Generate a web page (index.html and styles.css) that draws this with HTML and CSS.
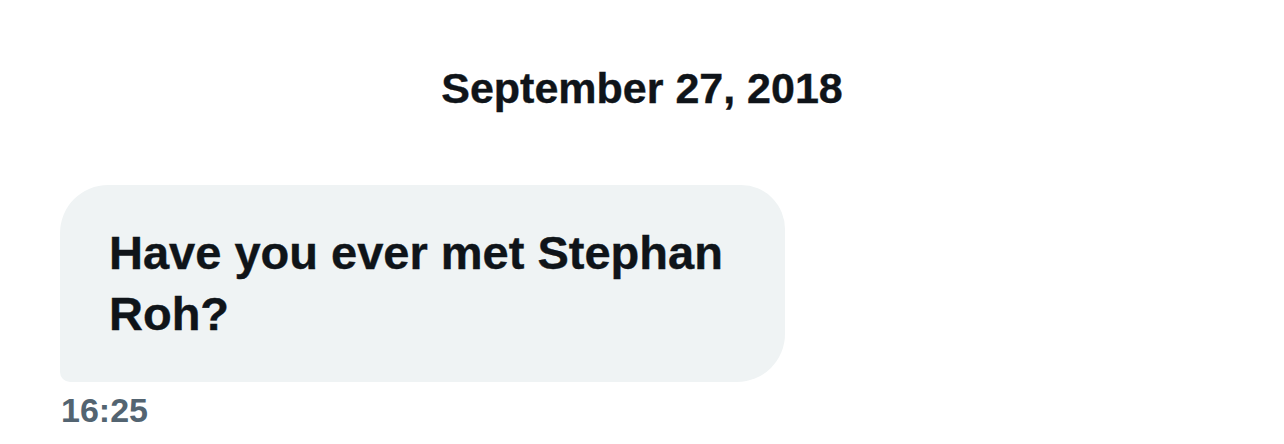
FILE: index.html
```html
<!DOCTYPE html>
<html>
<head>
<meta charset="utf-8">
<link rel="stylesheet" href="styles.css">
</head>
<body>
<main class="thread">
  <div class="date">September 27, 2018</div>
  <div class="message">
    <div class="bubble">Have you ever met Stephan Roh?</div>
    <div class="time">16:25</div>
  </div>
</main>
</body>
</html>
```
FILE: styles.css
```css
html, body {
  margin: 0;
  padding: 0;
  background: #ffffff;
}
body {
  font-family: "Liberation Sans", Arial, sans-serif;
  color: #0f1419;
}
.thread {
  width: 1284px;
  height: 444px;
  padding-top: 63px;
  box-sizing: border-box;
  display: flex;
  flex-direction: column;
}
.date {
  text-align: center;
  font-weight: 700;
  font-size: 43px;
  line-height: 50px;
  height: 50px;
  margin-bottom: 72px;
  -webkit-text-stroke: 0.4px #0f1419;
}
.message {
  padding-left: 60px;
  display: flex;
  flex-direction: column;
  align-items: flex-start;
}
.bubble {
  width: 725px;
  box-sizing: border-box;
  background: #eff3f4;
  border-radius: 48px 44px 48px 10px;
  padding: 37px 45px 38px 49px;
  font-weight: 700;
  font-size: 47px;
  line-height: 61px;
  -webkit-text-stroke: 0.4px #0f1419;
}
.time {
  margin-top: 8px;
  padding-left: 1px;
  font-weight: 700;
  font-size: 34px;
  line-height: 40px;
  color: #536471;
}
```
